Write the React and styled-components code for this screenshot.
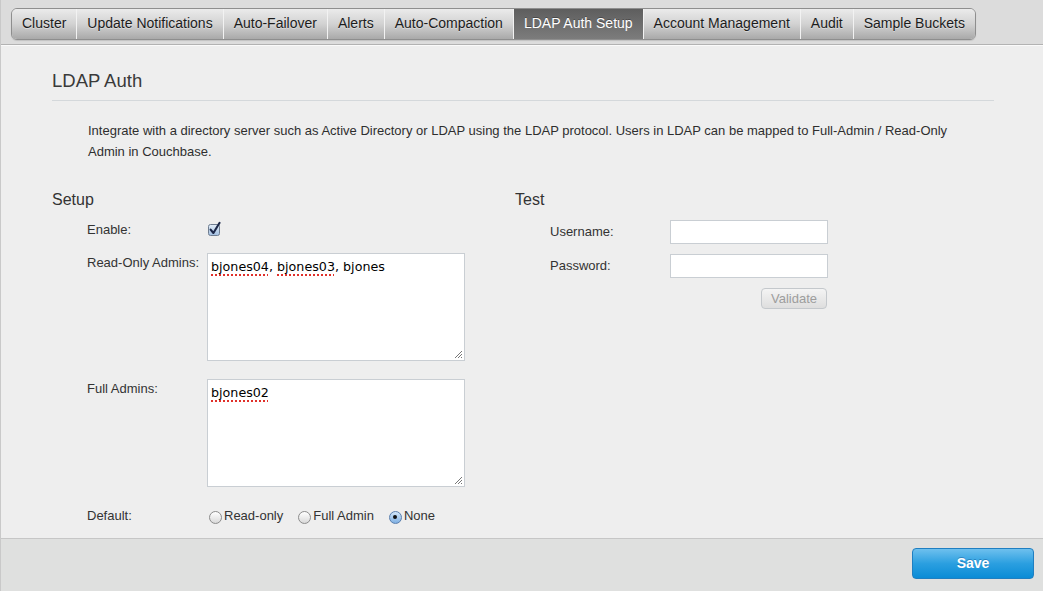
import React from "react";
import styled, { createGlobalStyle } from "styled-components";

const Global = createGlobalStyle`
  html, body { margin: 0; padding: 0; background: #ffffff; }
  body { font-family: "Liberation Sans", Arial, sans-serif; color: #333; }
`;

const Panel = styled.div`
  width: 1042px;
  border-left: 1px solid #c9c9c9;
  display: flex;
  flex-direction: column;
`;

const TabBand = styled.div`
  background: #dcdcdc;
  padding: 8px 0 4px 10px;
  border-bottom: 1px solid #b2b2b2;
`;

const TabStrip = styled.div`
  display: inline-flex;
  border: 1px solid #8e8e8e;
  border-radius: 6px;
  overflow: hidden;
  box-shadow: 0 1px 1px rgba(0, 0, 0, 0.12);
`;

const Tab = styled.div`
  height: 30px;
  line-height: 29px;
  padding: 0 10px;
  font-size: 14px;
  white-space: nowrap;
  color: ${(p) => (p.$active ? "#ffffff" : "#1c1c1c")};
  background: ${(p) =>
    p.$active
      ? "linear-gradient(#5e5e5e, #7c7c7c)"
      : "linear-gradient(#ebebeb 0%, #d2d2d2 50%, #a9a9a9 100%)"};
  text-shadow: ${(p) => (p.$active ? "0 -1px 0 rgba(0,0,0,0.3)" : "0 1px 0 rgba(255,255,255,0.4)")};
  & + & {
    border-left: 1px solid #f2f2f2;
  }
`;

const Content = styled.div`
  background: #eeeeee;
  border-top: 1px solid #fafafa;
  padding: 24px 49px 12px 51px;
`;

const Heading = styled.h2`
  margin: 0;
  font-size: 18.5px;
  font-weight: normal;
  line-height: 22px;
  color: #3a3a3a;
  padding-bottom: 8px;
  border-bottom: 1px solid #d4d8db;
`;

const Intro = styled.p`
  margin: 19px 0 0 36px;
  max-width: 880px;
  font-size: 13px;
  line-height: 21px;
  color: #2e2e2e;
`;

const Columns = styled.div`
  display: grid;
  grid-template-columns: 463px 1fr;
  margin-top: 28px;
`;

const Column = styled.div`
  display: flex;
  flex-direction: column;
`;

const SectionTitle = styled.h3`
  margin: 0;
  font-size: 16px;
  font-weight: normal;
  line-height: 20px;
  color: #333;
`;

const FieldRow = styled.div`
  display: grid;
  grid-template-columns: 120px auto;
  align-items: ${(p) => p.$align || "center"};
  margin-top: ${(p) => p.$mt}px;
  padding-left: 35px;
  min-height: 20px;
`;

const Label = styled.div`
  font-size: 13px;
  line-height: 20px;
  color: #333;
`;

const FakeTextArea = styled.div`
  position: relative;
  width: 250px;
  height: 100px;
  padding: 3px;
  background: #fff;
  border: 1px solid #c9ced3;
  font-family: "DejaVu Sans", Verdana, sans-serif;
  font-size: 12.7px;
  line-height: 20px;
  color: #000;
`;

const Misspelled = styled.span`
  text-decoration: underline dotted #e0302a;
  text-decoration-thickness: 2px;
  text-underline-offset: 3px;
`;

const Grip = styled.svg`
  position: absolute;
  right: 1px;
  bottom: 1px;
`;

const TextInput = styled.div`
  width: 156px;
  height: 22px;
  background: #fff;
  border: 1px solid #c9ced3;
`;

const ButtonRow = styled.div`
  display: flex;
  justify-content: flex-end;
  width: 157px;
  margin: 10px 0 0 155px;
`;

const GhostButton = styled.button`
  height: 21px;
  width: 66px;
  padding: 0;
  border: 1px solid #c4c8cc;
  border-radius: 4px;
  background: linear-gradient(#f4f4f4, #dedede);
  font-family: "Liberation Sans", Arial, sans-serif;
  font-size: 13px;
  color: #9d9d9d;
`;

const RadioGroup = styled.div`
  display: flex;
  align-items: center;
  gap: 15px;
  margin-left: 2px;
`;

const RadioOption = styled.label`
  display: flex;
  align-items: center;
  font-size: 13px;
  color: #333;
  line-height: 20px;
`;

const RadioDot = styled.span`
  box-sizing: border-box;
  width: 13px;
  height: 13px;
  border-radius: 50%;
  margin-right: 2px;
  margin-top: 2px;
  display: inline-flex;
  align-items: center;
  justify-content: center;
  border: 1px solid ${(p) => (p.$on ? "#5a7fae" : "#8c8c8c")};
  background: ${(p) =>
    p.$on ? "linear-gradient(#d3e6f8, #7fb0e3)" : "linear-gradient(#ffffff, #d9d9d9)"};
  &::after {
    content: "";
    display: ${(p) => (p.$on ? "block" : "none")};
    width: 4px;
    height: 4px;
    border-radius: 50%;
    background: #111;
  }
`;

const Footer = styled.div`
  display: flex;
  justify-content: flex-end;
  background: #dfe0df;
  border-top: 1px solid #c6c6c6;
  padding: 9px 9px 12px 0;
`;

const PrimaryButton = styled.button`
  width: 122px;
  height: 31px;
  border: 1px solid #1f7fc1;
  border-radius: 4px;
  background: linear-gradient(#6ec0ee 0%, #2b9fe0 50%, #0a8cd6 100%);
  color: #fff;
  font-family: "Liberation Sans", Arial, sans-serif;
  font-weight: bold;
  font-size: 14px;
  line-height: 27px;
  text-shadow: 0 -1px 0 rgba(0, 60, 120, 0.35);
`;

const tabs = [
  "Cluster",
  "Update Notifications",
  "Auto-Failover",
  "Alerts",
  "Auto-Compaction",
  "LDAP Auth Setup",
  "Account Management",
  "Audit",
  "Sample Buckets",
];

function Checkbox() {
  return (
    <svg width="16" height="16" viewBox="0 0 16 16" style={{ marginTop: -2 }}>
      <defs>
        <linearGradient id="cbg" x1="0" y1="0" x2="0" y2="1">
          <stop offset="0" stopColor="#e4eef8" />
          <stop offset="1" stopColor="#9fbde0" />
        </linearGradient>
      </defs>
      <rect x="1.5" y="3.5" width="11" height="11" rx="2" fill="url(#cbg)" stroke="#6f7d90" />
      <path d="M3.6 8.6 L6.4 12 L12.6 1.8" fill="none" stroke="#1b2748" strokeWidth="2.1" strokeLinecap="round" strokeLinejoin="round" />
    </svg>
  );
}

function ResizeGrip() {
  return (
    <Grip width="9" height="9" viewBox="0 0 9 9">
      <path d="M1 8 L8 1 M4 8 L8 4 M7 8 L8 7" stroke="#777" strokeWidth="1" />
    </Grip>
  );
}

export default function App() {
  return (
    <>
      <Global />
      <Panel>
        <TabBand>
          <TabStrip>
            {tabs.map((t) => (
              <Tab key={t} $active={t === "LDAP Auth Setup"}>
                {t}
              </Tab>
            ))}
          </TabStrip>
        </TabBand>
        <Content>
          <Heading>LDAP Auth</Heading>
          <Intro>
            Integrate with a directory server such as Active Directory or LDAP using the LDAP protocol. Users in
            LDAP can be mapped to Full-Admin / Read-Only Admin in Couchbase.
          </Intro>
          <Columns>
            <Column>
              <SectionTitle>Setup</SectionTitle>
              <FieldRow $mt={10}>
                <Label>Enable:</Label>
                <Checkbox />
              </FieldRow>
              <FieldRow $mt={13} $align="start">
                <Label>Read-Only Admins:</Label>
                <FakeTextArea>
                  <Misspelled>bjones04</Misspelled>, <Misspelled>bjones03</Misspelled>, bjones
                  <ResizeGrip />
                </FakeTextArea>
              </FieldRow>
              <FieldRow $mt={18} $align="start">
                <Label>Full Admins:</Label>
                <FakeTextArea>
                  <Misspelled>bjones02</Misspelled>
                  <ResizeGrip />
                </FakeTextArea>
              </FieldRow>
              <FieldRow $mt={19}>
                <Label>Default:</Label>
                <RadioGroup>
                  <RadioOption>
                    <RadioDot />
                    Read-only
                  </RadioOption>
                  <RadioOption>
                    <RadioDot />
                    Full Admin
                  </RadioOption>
                  <RadioOption>
                    <RadioDot $on />
                    None
                  </RadioOption>
                </RadioGroup>
              </FieldRow>
            </Column>
            <Column>
              <SectionTitle>Test</SectionTitle>
              <FieldRow $mt={10}>
                <Label>Username:</Label>
                <TextInput />
              </FieldRow>
              <FieldRow $mt={10}>
                <Label>Password:</Label>
                <TextInput />
              </FieldRow>
              <ButtonRow>
                <GhostButton disabled>Validate</GhostButton>
              </ButtonRow>
            </Column>
          </Columns>
        </Content>
        <Footer>
          <PrimaryButton>Save</PrimaryButton>
        </Footer>
      </Panel>
    </>
  );
}
